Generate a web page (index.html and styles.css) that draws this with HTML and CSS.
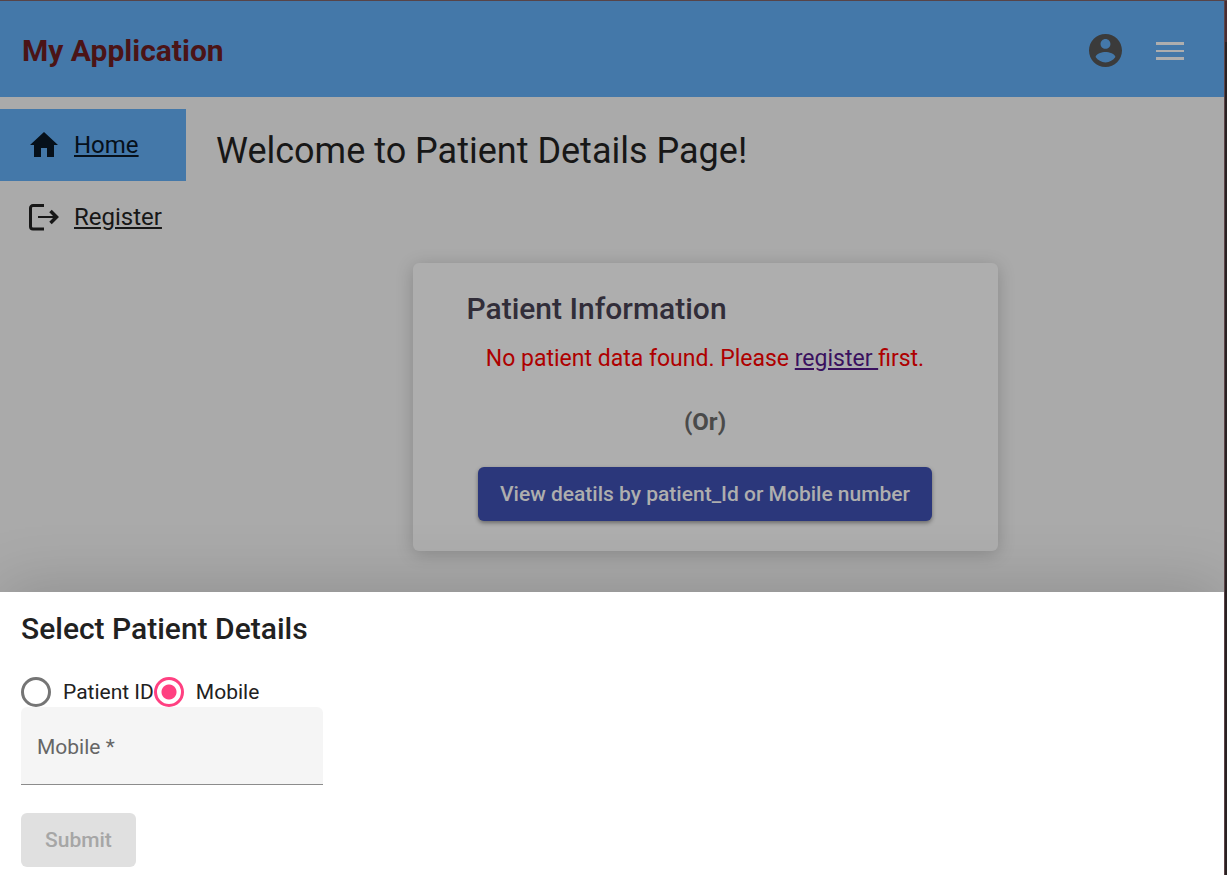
FILE: index.html
```html
<!DOCTYPE html>
<html lang="en">
<head>
<meta charset="utf-8">
<title>My Application</title>
<link rel="stylesheet" href="styles.css">
</head>
<body>
<div class="app">
  <header class="toolbar">
    <span class="brand">My Application</span>
    <button class="icon-button" type="button" aria-label="Account">
      <svg class="icon account" viewBox="2 2 20 20"><path d="M12 2C6.480 2 2 6.480 2 12s4.480 10 10 10 10-4.480 10-10S17.520 2 12 2zm0 3c1.660 0 3 1.340 3 3s-1.340 3-3 3-3-1.340-3-3 1.340-3 3-3zm0 14.200c-2.500 0-4.710-1.280-6-3.220.03-1.990 4-3.080 6-3.080 1.990 0 5.970 1.090 6 3.080-1.290 1.940-3.500 3.220-6 3.220z"/></svg>
    </button>
    <button class="icon-button" type="button" aria-label="Menu">
      <svg class="icon menu" viewBox="0 0 28 18" shape-rendering="crispEdges"><path d="M0 0h28v3H0zM0 8h28v2H0zM0 15h28v3H0z"/></svg>
    </button>
  </header>
  <div class="body">
    <nav class="sidebar">
      <div class="nav-item active">
        <svg class="icon nav-icon" viewBox="0 0 32 32"><path d="M13 28V19h6v9h7V16h4L16 3 2 16h4v12z"/></svg>
        <a href="#home">Home</a>
      </div>
      <div class="nav-item">
        <svg class="icon nav-icon" viewBox="0 0 32 32"><path d="M16 4.500H5a2.500 2.500 0 0 0-2.500 2.500v18.500a2.500 2.500 0 0 0 2.500 2.500h11" fill="none" stroke="currentColor" stroke-width="3"/><path d="M10 16h18" fill="none" stroke="currentColor" stroke-width="2"/><path d="M22.500 10l6 6-6 6" fill="none" stroke="currentColor" stroke-width="3.500"/></svg>
        <a href="#register">Register</a>
      </div>
    </nav>
    <main class="content">
      <h1>Welcome to Patient Details Page!</h1>
      <section class="card">
        <h2>Patient Information</h2>
        <p class="message">No patient data found. Please <a href="#register">register </a>first.</p>
        <p class="or">(Or)</p>
        <button class="button primary" type="button">View deatils by patient_Id or Mobile number</button>
      </section>
    </main>
  </div>
  <form class="sheet">
    <h2>Select Patient Details</h2>
    <div class="radios">
      <input type="radio" name="kind" id="kind-id"><label for="kind-id">Patient ID</label>
      <input type="radio" name="kind" id="kind-mobile" checked><label for="kind-mobile">Mobile</label>
    </div>
    <input class="field" type="text" aria-label="Mobile" placeholder="Mobile *">
    <button class="button submit" type="submit" disabled>Submit</button>
  </form>
</div>
<div class="edge"></div>
</body>
</html>
```
FILE: styles.css
```css
* { box-sizing: border-box; }
body {
  margin: 0;
  min-height: 100vh;
  display: flex;
  border-top: 1px solid #574448;
  background: #aaaaaa;
  color: #171717;
  font-family: Roboto, sans-serif;
}
h1, h2, p { margin: 0; }
button, input { font-family: inherit; }
.app { flex: 1; display: flex; flex-direction: column; }
.edge {
  width: 3px;
  border-left: 1px solid #5c4448;
  background: linear-gradient(#482d32 41px, #292122 41px);
}
.toolbar {
  height: 96px;
  padding: 3px 40px 0 22px;
  display: flex;
  align-items: center;
  gap: 34px;
  background: #4478a9;
}
.brand { flex: 1; color: #4b1416; font-size: 30px; font-weight: 700; }
.icon { display: block; fill: currentColor; }
.icon-button { padding: 0; border: 0; background: none; color: #3b3b3b; }
.account { width: 33px; height: 33px; }
.menu { width: 28px; height: 18px; color: #aeaeae; }
.body { flex: 1; display: flex; }
.sidebar { width: 186px; padding-top: 12px; }
.nav-item {
  height: 72px;
  padding-left: 28px;
  display: flex;
  align-items: center;
  gap: 14px;
  font-size: 24px;
}
.nav-item.active { background: #4478a9; color: #06101a; }
.nav-item a { color: inherit; }
.nav-icon { width: 32px; height: 32px; }
.content { flex: 1; display: flex; flex-direction: column; align-items: center; }
h1 {
  align-self: stretch;
  padding: 30px 30px 0;
  font-size: 36px;
  line-height: 48px;
  font-weight: 400;
}
.card {
  width: 585px;
  margin: 88px 0 41px;
  padding: 25px 24px 30px;
  display: flex;
  flex-direction: column;
  align-items: center;
  border-radius: 6px;
  background: #aeaeae;
  box-shadow: 0 3px 18px rgba(0, 0, 0, 0.2);
}
.card h2 {
  align-self: stretch;
  padding-left: 30px;
  color: #312d39;
  font-size: 30px;
  line-height: 42px;
  font-weight: 500;
}
.message { padding-top: 14px; color: #ae0000; font-size: 23px; line-height: 30px; }
.message a { color: #3a115f; }
.or { padding: 33px 0 30px; color: #4a4a4a; font-size: 24px; line-height: 30px; font-weight: 700; }
.button {
  height: 54px;
  padding: 0 24px;
  border: 0;
  border-radius: 6px;
  font-size: 21px;
  font-weight: 500;
}
.primary {
  padding: 0 22px;
  background: #2b377b;
  color: #aeaeae;
  box-shadow: 0 2px 4px rgba(0, 0, 0, 0.4);
}
.sheet {
  height: 283px;
  padding: 13px 21px 8px;
  display: flex;
  flex-direction: column;
  align-items: flex-start;
  background: #ffffff;
  color: #212121;
  box-shadow: 0 -6px 60px rgba(0, 0, 0, 0.16);
  clip-path: inset(-80px 0 0 0);
}
.sheet h2 { font-size: 30px; line-height: 48px; font-weight: 500; }
.radios {
  padding-top: 24px;
  display: flex;
  align-items: center;
  font-size: 21px;
  line-height: 30px;
}
.radios input {
  appearance: none;
  width: 30px;
  height: 30px;
  margin: 0;
  border: 3px solid #757575;
  border-radius: 50%;
}
.radios input:checked {
  border-color: #ff4081;
  background: radial-gradient(circle, #ff4081 7px, transparent 8px);
}
.radios label { padding-left: 12px; }
.field {
  width: 302px;
  height: 78px;
  padding: 2px 16px 0;
  border: 0;
  border-bottom: 1px solid #8c8c8c;
  border-radius: 6px 6px 0 0;
  background: #f5f5f5;
  font-size: 21px;
}
.field::placeholder { color: #666666; opacity: 1; }
.submit { margin-top: 28px; background: #e0e0e0; color: #a6a6a6; }
```
